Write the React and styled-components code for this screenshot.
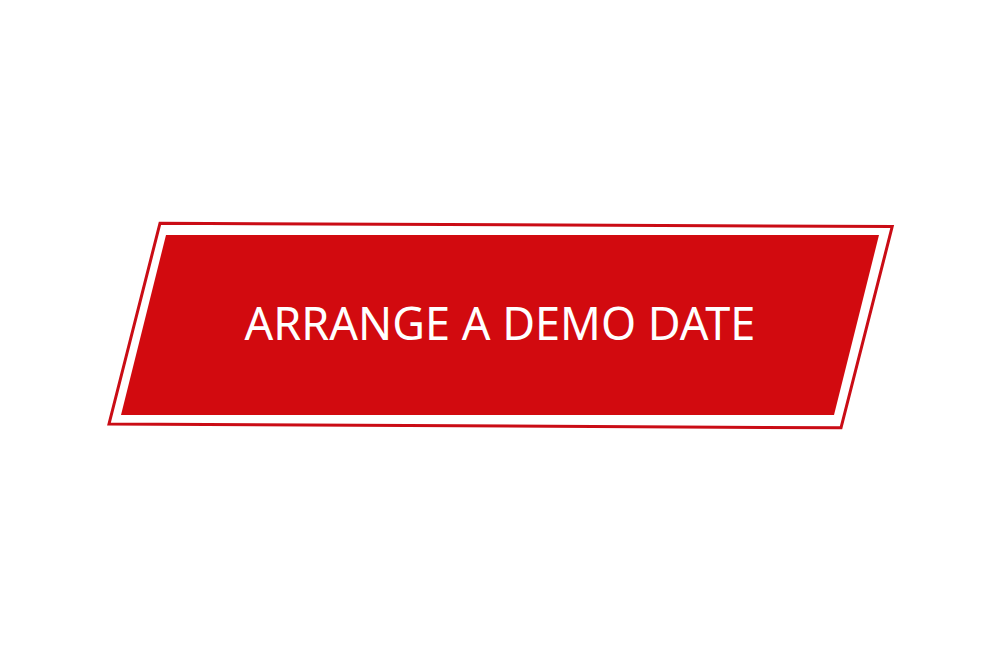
import styled, { createGlobalStyle } from "styled-components";

const GlobalStyle = createGlobalStyle`
  body {
    margin: 0;
    background-color: #ffffff;
  }
`;

const Page = styled.main`
  display: flex;
  justify-content: center;
  align-items: center;
  min-height: 100vh;
`;

const DemoButton = styled.button`
  position: relative;
  width: 100%;
  max-width: 786px;
  padding: 71px 60px 75px;
  border: none;
  background: none;
  color: #ffffff;
  font-family: "Noto Sans", "Open Sans", sans-serif;
  font-size: 45px;
  line-height: 64px;
  cursor: pointer;

  @media (max-width: 768px) {
    font-size: 28px;
  }
`;

const Backdrop = styled.svg`
  position: absolute;
  inset: 0;
  width: 100%;
  height: 100%;
  overflow: visible;

  & .outline {
    fill: none;
    stroke: #ca0c15;
    stroke-width: 3;
  }

  & .fill {
    fill: #d20a0f;
  }
`;

const Label = styled.span`
  position: relative;
`;

const App = () => {
  return (
    <>
      <GlobalStyle />
      <Page>
        <DemoButton type="button">
          <Backdrop viewBox="0 0 786 210" preserveAspectRatio="none" aria-hidden="true">
            <polygon className="outline" points="53,3.2 785.2,6.6 734,207.8 2,204" />
            <polygon className="fill" points="59,15 772,15 727,195 14,195" />
          </Backdrop>
          <Label>ARRANGE A DEMO DATE</Label>
        </DemoButton>
      </Page>
    </>
  );
};

export default App;
